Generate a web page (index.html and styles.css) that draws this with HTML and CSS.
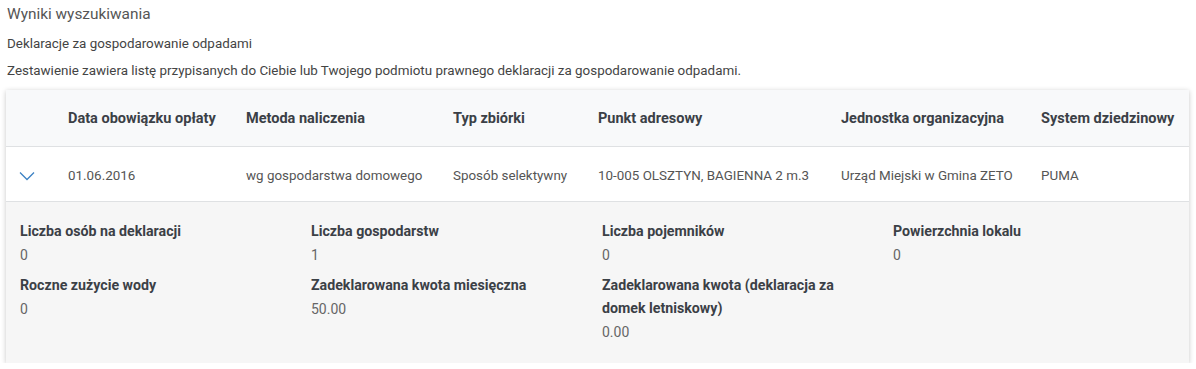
FILE: index.html
```html
<!DOCTYPE html>
<html lang="pl">
<head>
<meta charset="utf-8">
<title>Wyniki wyszukiwania</title>
<link rel="stylesheet" href="styles.css">
</head>
<body>
<main class="page">
  <h1 class="title">Wyniki wyszukiwania</h1>
  <h2 class="subtitle">Deklaracje za gospodarowanie odpadami</h2>
  <p class="desc">Zestawienie zawiera listę przypisanych do Ciebie lub Twojego podmiotu prawnego deklaracji za gospodarowanie odpadami.</p>
  <section class="card">
    <div class="row head">
      <div></div>
      <div>Data obowiązku opłaty</div>
      <div>Metoda naliczenia</div>
      <div>Typ zbiórki</div>
      <div>Punkt adresowy</div>
      <div>Jednostka organizacyjna</div>
      <div>System dziedzinowy</div>
    </div>
    <div class="row body">
      <div class="toggle">
        <svg width="16" height="10" viewBox="0 0 16 10"><path d="M1 1.5 L8 8.5 L15 1.5" fill="none" stroke="#3d82c4" stroke-width="1.3"/></svg>
      </div>
      <div>01.06.2016</div>
      <div>wg gospodarstwa domowego</div>
      <div>Sposób selektywny</div>
      <div>10-005 OLSZTYN, BAGIENNA 2 m.3</div>
      <div>Urząd Miejski w Gmina ZETO</div>
      <div>PUMA</div>
    </div>
    <div class="details">
      <div class="item"><div class="label">Liczba osób na deklaracji</div><div class="value">0</div></div>
      <div class="item"><div class="label">Liczba gospodarstw</div><div class="value">1</div></div>
      <div class="item"><div class="label">Liczba pojemników</div><div class="value">0</div></div>
      <div class="item"><div class="label">Powierzchnia lokalu</div><div class="value">0</div></div>
      <div class="item"><div class="label">Roczne zużycie wody</div><div class="value">0</div></div>
      <div class="item"><div class="label">Zadeklarowana kwota miesięczna</div><div class="value">50.00</div></div>
      <div class="item"><div class="label">Zadeklarowana kwota (deklaracja za domek letniskowy)</div><div class="value">0.00</div></div>
    </div>
  </section>
</main>
</body>
</html>
```

FILE: styles.css
```css
* { box-sizing: border-box; }
html, body { margin: 0; padding: 0; background: #fff; }
body {
  font-family: "Roboto", "Liberation Sans", sans-serif;
  color: #4a4a4a;
}
.page { padding: 0 7px 0 6px; }
.title {
  margin: 0;
  padding-left: 1px;
  font-size: 15.4px;
  font-weight: 400;
  line-height: 28px;
  color: #555;
}
.subtitle {
  margin: 0;
  padding-left: 1px;
  font-size: 13.4px;
  font-weight: 400;
  line-height: 32px;
  color: #444;
}
.desc {
  margin: 0;
  padding-left: 1px;
  font-size: 13.4px;
  line-height: 22px;
  color: #444;
}
.card {
  margin-top: 8px;
  background: #fff;
  box-shadow: 0 1px 5px rgba(0,0,0,0.22);
}
.row {
  display: grid;
  grid-template-columns: 62px 178px 207px 145px 243px 200px 1fr;
  align-items: center;
  border-bottom: 1px solid #dfe1e3;
}
.head {
  height: 57px;
  background: #f8f9fa;
  font-weight: 700;
  font-size: 14.5px;
  color: #3b4046;
}
.body {
  height: 55px;
  font-size: 13.4px;
  color: #555;
  padding-top: 2px;
}
.toggle { display: flex; padding-left: 13px; padding-top: 2px; }
.toggle svg { display: block; }
.details {
  display: grid;
  grid-template-columns: repeat(4, 291px);
  align-content: start;
  background: #f6f6f6;
  padding: 18px 0 6px 14px;
  min-height: 161px;
}
.item { margin-bottom: 7px; }
.label {
  font-weight: 700;
  font-size: 14.2px;
  line-height: 23px;
  color: #3b4046;
  padding-right: 40px;
}
.value {
  font-size: 14px;
  line-height: 23px;
  color: #666;
  padding-top: 1px;
}
```
